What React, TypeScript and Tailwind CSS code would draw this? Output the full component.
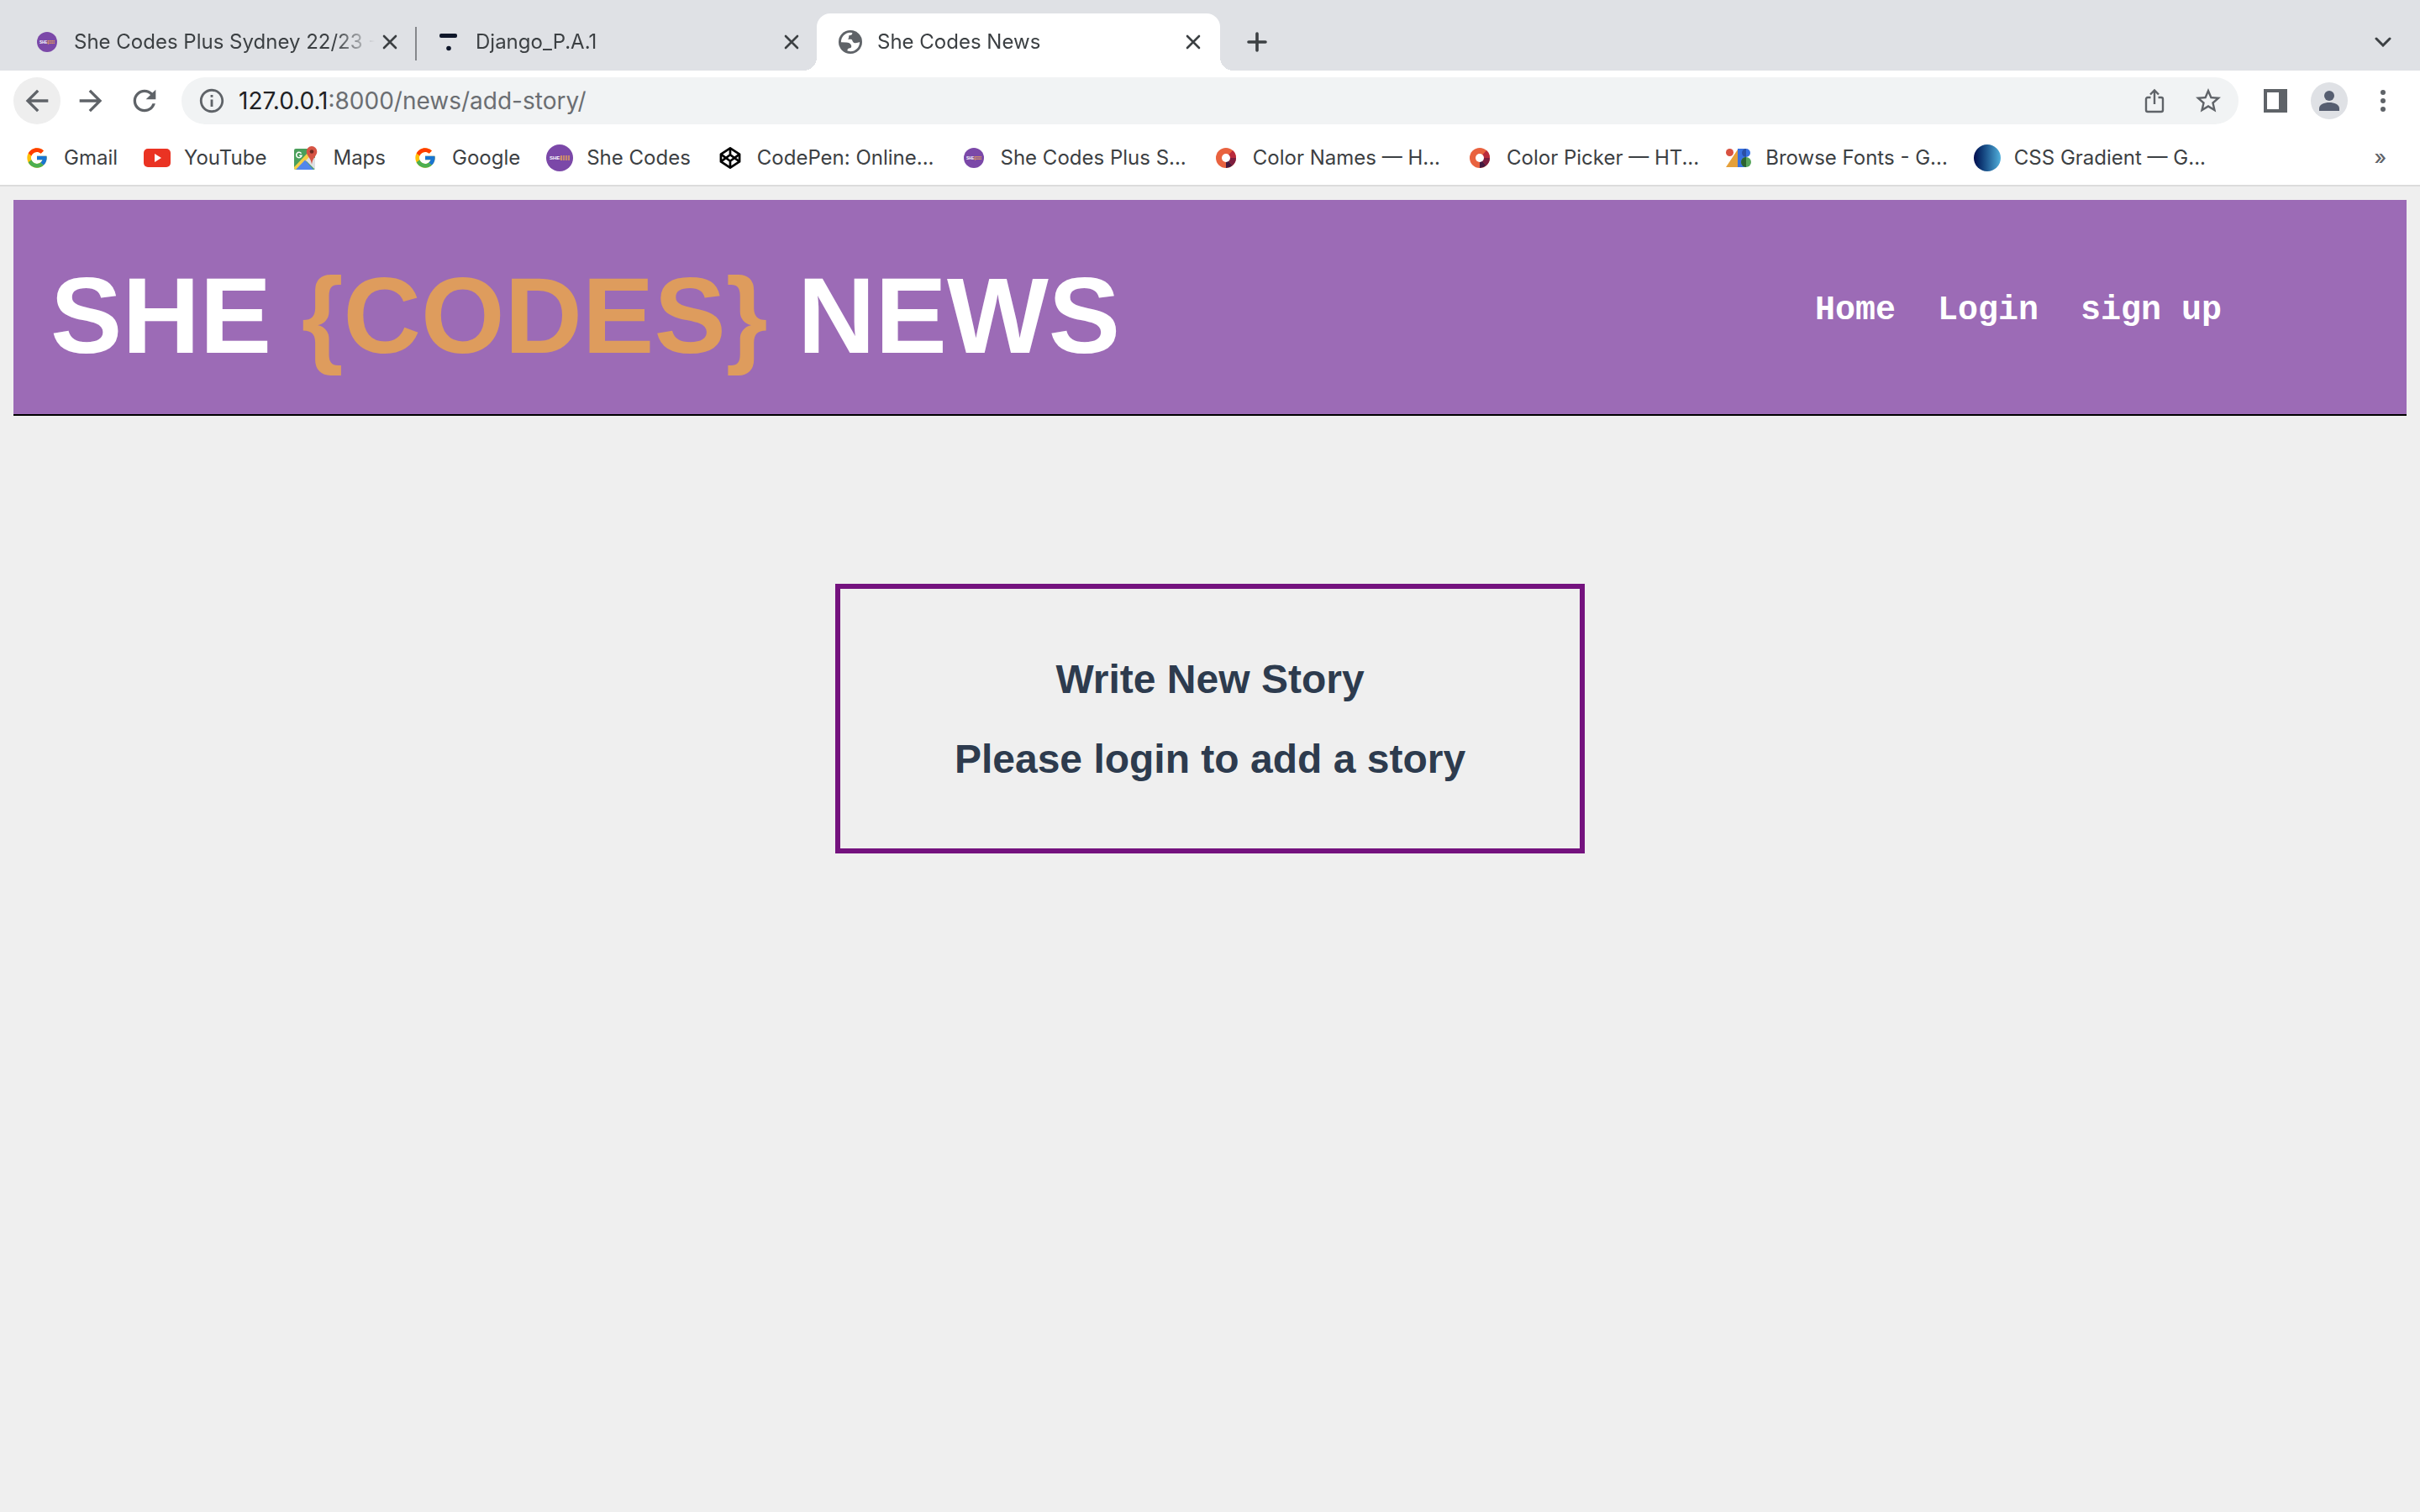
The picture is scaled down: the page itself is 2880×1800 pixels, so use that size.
import type { ReactNode } from 'react';
import { FcGoogle } from 'react-icons/fc';
import { MdArrowBack, MdArrowForward, MdInfoOutline, MdRefresh, MdStarOutline } from 'react-icons/md';

function SheCodesIcon({ size }: { size: number }) {
  return (
    <svg width={size} height={size} viewBox="0 0 32 32" aria-hidden="true">
      <circle cx="16" cy="16" r="16" fill="#7b48a8" />
      <text x="4" y="18" fontSize="6" fontWeight="700" fontFamily="Liberation Sans, sans-serif" fill="#fff">
        SHE<tspan fill="#de9c5d">{'{'}</tspan>
      </text>
      <path d="M17 14h11M17 16h11M17 18h11" stroke="#de9c5d" strokeWidth="1.400" strokeDasharray="2.200 .800" />
    </svg>
  );
}

function DjangoIcon() {
  return (
    <svg width="24" height="24" viewBox="0 0 24 24" fill="#0f172a" aria-hidden="true">
      <rect x="1" y="2" width="21" height="5" rx="2" />
      <circle cx="12" cy="19.500" r="2.800" />
    </svg>
  );
}

function GlobeIcon() {
  return (
    <svg width="28" height="28" viewBox="0 0 28 28" aria-hidden="true">
      <circle cx="14" cy="14" r="14" fill="#5f6368" />
      <path
        fill="#fff"
        d="M2.900 14.200C2.900 8 7.500 3.200 13.500 2.800L16.300 3C16.400 5.500 15 6.200 12.300 6.300C12 8.500 12.500 9.500 11 10.800C13 11 15 10.500 16 11.500C16.800 14 18 15.500 20 15.300C22 15.200 23.500 14.500 25.100 14C25.100 20 20.500 25 14.500 25.200L10.500 24.500C10.300 22 11.500 21.500 13.500 21.300C15.500 21 15.500 18.500 14.800 17.500C14 15.500 12 14.800 9 14.600Z"
      />
    </svg>
  );
}

function YouTubeIcon() {
  return (
    <svg width="32" height="22" viewBox="0 0 32 22" aria-hidden="true">
      <rect width="32" height="22" rx="5" fill="#ea3323" />
      <path d="M13 6l8 5-8 5z" fill="#fff" />
    </svg>
  );
}

function MapsIcon() {
  return (
    <svg width="30" height="30" viewBox="0 0 30 30" aria-hidden="true">
      <clipPath id="map-sheet">
        <rect x="1" y="4" width="25" height="25" rx="2" />
      </clipPath>
      <g clipPath="url(#map-sheet)">
        <rect x="1" y="4" width="25" height="25" fill="#4a9f5b" />
        <path d="M0 27L19 7l4 4L4 31z" fill="#f5cf46" />
        <path d="M15 18l5-5 6 2v14z" fill="#dfe1e5" />
        <path d="M2 30L14 17.500L25 30z" fill="#5186ec" />
      </g>
      <path d="M9.500 9.700A3.200 3.200 0 1 0 10 12.200H7.200" fill="none" stroke="#fff" strokeWidth="1.500" />
      <path d="M22 1a6.300 6.300 0 0 0-6.300 6.400c0 5 5 6.600 6.300 15 1.300-8.400 6.300-10 6.300-15A6.300 6.300 0 0 0 22 1z" fill="#d65444" />
      <circle cx="22" cy="7.500" r="2.300" fill="#6f2a22" />
    </svg>
  );
}

function CodePenIcon() {
  return (
    <svg width="28" height="28" viewBox="0 0 24 24" fill="none" stroke="#000" strokeWidth="2.300" strokeLinejoin="round" aria-hidden="true">
      <path d="M12 2l9.500 6.200v7.600L12 22l-9.500-6.200V8.200z" />
      <path d="M12 22v-6.500M21.500 8.200L12 15.200 2.500 8.200M2.500 15.800L12 8.800l9.500 7M12 2v6.500" />
    </svg>
  );
}

function ColorCodesIcon() {
  return (
    <svg width="24" height="24" viewBox="0 0 24 24" aria-hidden="true">
      <circle cx="12" cy="12" r="12" fill="#e9623f" />
      <path d="M12 12L20 3a12 12 0 0 1 4 9z" fill="#b92a3c" />
      <path d="M12 12h12a12 12 0 0 1-4.500 9.300z" fill="#7d1d3f" />
      <path d="M12 12l7.500 9.300A12 12 0 0 1 12 24z" fill="#45193f" />
      <circle cx="12" cy="12" r="5" fill="#fff" />
    </svg>
  );
}

function FontsIcon() {
  return (
    <svg width="30" height="22" viewBox="0 0 30 22" aria-hidden="true">
      <path d="M14 1v21H0z" fill="#e5a03a" />
      <circle cx="4.500" cy="4.500" r="4.500" fill="#d85140" />
      <path d="M14 0h10v22H14z" fill="#3871e0" />
      <circle cx="24" cy="5" r="5" fill="#3871e0" />
      <path d="M24 0a5 5 0 0 0 0 10z" fill="#2a4fa5" />
      <circle cx="24" cy="16" r="6" fill="#58a55c" />
      <path d="M24 10a6 6 0 0 0 0 12z" fill="#2c6331" />
    </svg>
  );
}

function ShareIcon() {
  return (
    <svg width="24" height="30" viewBox="0 0 24 30" fill="none" stroke="#5f6368" strokeWidth="2.400" aria-hidden="true">
      <path d="M7.500 11H4a2 2 0 0 0-2 2v13a2 2 0 0 0 2 2h16a2 2 0 0 0 2-2V13a2 2 0 0 0-2-2h-3.500" />
      <path d="M12 19V3M7 7.500l5-5 5 5" />
    </svg>
  );
}

function CloseIcon() {
  return (
    <svg width="18" height="18" viewBox="0 0 18 18" stroke="#3c4043" strokeWidth="2.600" strokeLinecap="round" aria-hidden="true">
      <path d="M2 2l14 14M16 2L2 16" />
    </svg>
  );
}

function Tab({ icon, title, active = false, divider = false }: { icon: ReactNode; title: string; active?: boolean; divider?: boolean }) {
  return (
    <div
      className={
        active
          ? 'relative flex h-17 w-120 items-center rounded-t-2xl bg-white pr-3.5 pl-6'
          : 'relative flex h-17 w-[478px] items-center pr-3 pl-6'
      }
    >
      {active && (
        <>
          <span className="absolute bottom-0 -left-4 size-4 bg-[radial-gradient(circle_at_0_0,transparent_16px,white_16px)]" />
          <span className="absolute -right-4 bottom-0 size-4 bg-[radial-gradient(circle_at_100%_0,transparent_16px,white_16px)]" />
        </>
      )}
      <button type="button" role="tab" aria-selected={active} className="flex min-w-0 flex-1 items-center gap-4 text-left">
        <span className="flex w-8 shrink-0 justify-center">{icon}</span>
        <span className="min-w-0 flex-1 whitespace-nowrap [mask-image:linear-gradient(to_right,black_calc(100%-48px),transparent)]">
          {title}
        </span>
      </button>
      <button type="button" aria-label={`Close ${title}`} className="flex size-9 shrink-0 items-center justify-center">
        <CloseIcon />
      </button>
      {divider && <span className="absolute top-4 -right-0.5 h-10 w-0.5 bg-[#85878b]" />}
    </div>
  );
}

function ToolButton({ label, className = '', children }: { label: string; className?: string; children: ReactNode }) {
  return (
    <button type="button" aria-label={label} className={`flex size-14 shrink-0 items-center justify-center rounded-full text-[#5f6368] ${className}`}>
      {children}
    </button>
  );
}

const bookmarks: { label: string; icon: ReactNode }[] = [
  { label: 'Gmail', icon: <FcGoogle size={28} /> },
  { label: 'YouTube', icon: <YouTubeIcon /> },
  { label: 'Maps', icon: <MapsIcon /> },
  { label: 'Google', icon: <FcGoogle size={28} /> },
  { label: 'She Codes', icon: <SheCodesIcon size={32} /> },
  { label: 'CodePen: Online...', icon: <CodePenIcon /> },
  { label: 'She Codes Plus S...', icon: <SheCodesIcon size={24} /> },
  { label: 'Color Names — H...', icon: <ColorCodesIcon /> },
  { label: 'Color Picker — HT...', icon: <ColorCodesIcon /> },
  { label: 'Browse Fonts - G...', icon: <FontsIcon /> },
  { label: 'CSS Gradient — G...', icon: <span className="size-8 rounded-full bg-linear-to-r from-[#050a4e] to-[#52b0dc]" /> },
];

function BrowserChrome() {
  return (
    <div className="border-b-2 border-[#dcdcdc] bg-white font-[Inter,sans-serif] text-2xl text-[#3c4043]">
      <div className="flex items-center bg-[#dfe1e5] px-4 pt-4">
        <div role="tablist" className="flex">
          <Tab icon={<SheCodesIcon size={24} />} title="She Codes Plus Sydney 22/23 -" divider />
          <Tab icon={<DjangoIcon />} title="Django_P.A.1" />
          <Tab icon={<GlobeIcon />} title="She Codes News" active />
        </div>
        <ToolButton label="New tab" className="ml-4">
          <svg width="24" height="24" viewBox="0 0 24 24" stroke="#3c4043" strokeWidth="3.600" strokeLinecap="round" aria-hidden="true">
            <path d="M12 2v20M2 12h20" />
          </svg>
        </ToolButton>
        <ToolButton label="Search tabs" className="ml-auto">
          <svg width="20" height="12" viewBox="0 0 20 12" fill="none" stroke="#3c4043" strokeWidth="3" strokeLinecap="round" aria-hidden="true">
            <path d="M2 2l8 8 8-8" />
          </svg>
        </ToolButton>
      </div>

      <div className="flex items-center gap-2 px-4 pt-2">
        <ToolButton label="Back" className="bg-[#eeeeee]">
          <MdArrowBack size={40} />
        </ToolButton>
        <ToolButton label="Forward">
          <MdArrowForward size={40} />
        </ToolButton>
        <ToolButton label="Reload">
          <MdRefresh size={40} />
        </ToolButton>
        <div className="mx-2 flex h-14 min-w-0 flex-1 items-center rounded-full bg-[#f1f3f4] pr-2 pl-[19px]">
          <MdInfoOutline size={34} className="shrink-0 text-[#5f6368]" />
          <a href="#address" className="ml-[15px] flex-1 text-[28px] leading-9 text-[#6b6e72]">
            <span className="text-[#202124]">127.0.0.1</span>:8000/news/add-story/
          </a>
          <ToolButton label="Share" className="mr-2">
            <ShareIcon />
          </ToolButton>
          <ToolButton label="Bookmark this page">
            <MdStarOutline size={36} />
          </ToolButton>
        </div>
        <ToolButton label="Side panel">
          <svg width="28" height="28" viewBox="0 0 28 28" aria-hidden="true">
            <path d="M0 0h28v28H0zM4 4v20h14V4z" fill="#5f6368" fillRule="evenodd" />
          </svg>
        </ToolButton>
        <ToolButton label="Profile">
          <svg width="44" height="44" viewBox="0 0 44 44" aria-hidden="true">
            <circle cx="22" cy="22" r="22" fill="#dfe1e5" />
            <circle cx="22" cy="16" r="6" fill="#565e70" />
            <path d="M10 34v-3c0-4.500 6-7 12-7s12 2.500 12 7v3z" fill="#565e70" />
          </svg>
        </ToolButton>
        <ToolButton label="Menu">
          <svg width="6" height="26" viewBox="0 0 6 26" fill="#5f6368" aria-hidden="true">
            <circle cx="3" cy="3" r="3" />
            <circle cx="3" cy="13" r="3" />
            <circle cx="3" cy="23" r="3" />
          </svg>
        </ToolButton>
      </div>

      <nav aria-label="Bookmarks" className="flex h-18 items-center gap-[31px] pt-4 pb-2 pl-7">
        {bookmarks.map(({ label, icon }) => (
          <a key={label} href="#bookmark" className="flex h-8 items-center gap-4 whitespace-nowrap">
            <span className="flex w-8 shrink-0 items-center justify-center">{icon}</span>
            {label}
          </a>
        ))}
        <button type="button" aria-label="More bookmarks" className="mr-10 ml-auto font-medium text-[#5f6368]">
          »
        </button>
      </nav>
    </div>
  );
}

export default function App() {
  return (
    <div className="min-h-screen bg-[#efefef] font-['Liberation_Sans',Arial,sans-serif]">
      <BrowserChrome />
      <div className="p-4">
        <header className="flex items-center justify-between border-b-2 border-black bg-[#9c6bb6] pt-[54px] pr-[220px] pb-[53px] pl-11 text-white">
          <h1 className="pt-5 text-9xl leading-none font-bold whitespace-nowrap">
            SHE <span className="text-[#de9c5d]">{'{CODES}'}</span> NEWS
          </h1>
          <nav className="flex gap-[50px] pt-2 font-['Liberation_Mono','Courier_New',monospace] text-[40px] leading-12 font-bold whitespace-nowrap">
            <a href="#home">Home</a>
            <a href="#login">Login</a>
            <a href="#signup">sign up</a>
          </nav>
        </header>
        <main className="mx-auto mt-50 flex w-fit flex-col gap-[39px] border-6 border-[#74127e] px-34 pt-20 pb-[78px] text-center text-5xl font-bold text-[#2d3b4e]">
          <h2 className="leading-14">Write New Story</h2>
          <h2 className="leading-14">Please login to add a story</h2>
        </main>
      </div>
    </div>
  );
}
